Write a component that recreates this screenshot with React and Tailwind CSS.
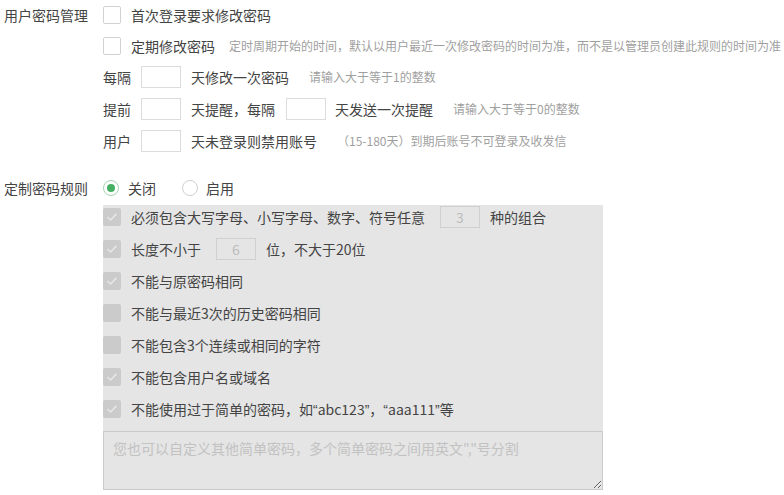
import React from "react";

const font = { fontFamily: '"Noto Sans CJK SC", "Microsoft YaHei", sans-serif' };

function Q({ children }) {
  return <span style={{ fontFamily: '"Liberation Sans", sans-serif' }}>{children}</span>;
}

function Box() {
  return <div className="w-[18px] h-[18px] shrink-0 rounded-[2px] border border-[#d2d2d2] bg-white" />;
}

function GrayBox({ checked }) {
  return (
    <div className="w-[18px] h-[18px] shrink-0 rounded-[2px] bg-[#cbcbcb] flex items-center justify-center">
      {checked && (
        <svg width="12" height="10" viewBox="0 0 12 10">
          <path d="M1.5 5.2 L4.6 8 L10.5 1.8" fill="none" stroke="#e6e6e6" strokeWidth="1.6" />
        </svg>
      )}
    </div>
  );
}

function Inp({ disabled, value }) {
  return (
    <div
      className={
        "w-[40px] h-[22px] shrink-0 border flex items-center justify-center text-[14px] " +
        (disabled ? "border-[#d0d0d0] bg-[#e5e5e5] text-[#bcbcbc]" : "border-[#dcdcdc] bg-white")
      }
    >
      {value}
    </div>
  );
}

function Note({ children, className = "" }) {
  return <span className={"text-[12px] text-[#9f9f9f] whitespace-nowrap " + className}>{children}</span>;
}

export default function App() {
  return (
    <div className="w-[784px] h-[495px] overflow-hidden bg-white text-[14px] text-[#444] leading-[20px] pl-[4px]" style={font}>
      {/* Section 1 */}
      <div className="flex">
        <div className="w-[99px] shrink-0 h-[30px] flex items-center">用户密码管理</div>
        <div className="flex flex-col">
          <div className="h-[30px] flex items-center">
            <Box />
            <span className="ml-[10px]">首次登录要求修改密码</span>
          </div>
          <div className="h-[31px] flex items-center whitespace-nowrap">
            <Box />
            <span className="ml-[10px]">定期修改密码</span>
            <Note className="ml-[14px]">定时周期开始的时间，默认以用户最近一次修改密码的时间为准，而不是以管理员创建此规则的时间为准</Note>
          </div>
          <div className="h-[32px] flex items-center whitespace-nowrap">
            <span className="w-[28px]">每隔</span>
            <div className="ml-[10px]"><Inp /></div>
            <span className="ml-[10px]">天修改一次密码</span>
            <Note className="ml-[20px]">请输入大于等于1的整数</Note>
          </div>
          <div className="h-[32px] flex items-center whitespace-nowrap">
            <span className="w-[28px]">提前</span>
            <div className="ml-[10px]"><Inp /></div>
            <span className="ml-[10px]">天提醒，每隔</span>
            <div className="ml-[11px]"><Inp /></div>
            <span className="ml-[9px]">天发送一次提醒</span>
            <Note className="ml-[20px]">请输入大于等于0的整数</Note>
          </div>
          <div className="h-[32px] flex items-center whitespace-nowrap">
            <span className="w-[28px]">用户</span>
            <div className="ml-[10px]"><Inp /></div>
            <span className="ml-[10px]">天未登录则禁用账号</span>
            <Note className="ml-[20px]">（15-180天）到期后账号不可登录及收发信</Note>
          </div>
        </div>
      </div>

      {/* Section 2 */}
      <div className="flex mt-[15px]">
        <div className="w-[99px] shrink-0 h-[32px] flex items-center">定制密码规则</div>
        <div className="flex flex-col">
          <div className="h-[32px] flex items-center">
            <div className="w-[16px] h-[16px] rounded-full border border-[#a8d2b1] bg-white flex items-center justify-center">
              <div className="w-[8px] h-[8px] rounded-full bg-[#45b062]" />
            </div>
            <span className="ml-[9px]">关闭</span>
            <div className="ml-[26px] w-[16px] h-[16px] rounded-full border border-[#d0d0d0] bg-white" />
            <span className="ml-[8px]">启用</span>
          </div>
          <div className="mt-[1px] w-[500px] bg-[#e5e5e5] pt-[3px] flex flex-col">
            <div className="flex flex-col gap-[14px]">
              <div className="h-[18px] flex items-center whitespace-nowrap">
                <GrayBox checked />
                <span className="ml-[10px]">必须包含大写字母、小写字母、数字、符号任意</span>
                <div className="ml-[15px]"><Inp disabled value="3" /></div>
                <span className="ml-[10px]">种的组合</span>
              </div>
              <div className="h-[18px] flex items-center whitespace-nowrap">
                <GrayBox checked />
                <span className="ml-[10px]">长度不小于</span>
                <div className="ml-[15px]"><Inp disabled value="6" /></div>
                <span className="ml-[10px]">位，不大于20位</span>
              </div>
              <div className="h-[18px] flex items-center">
                <GrayBox checked />
                <span className="ml-[10px]">不能与原密码相同</span>
              </div>
              <div className="h-[18px] flex items-center">
                <GrayBox />
                <span className="ml-[10px]">不能与最近3次的历史密码相同</span>
              </div>
              <div className="h-[18px] flex items-center">
                <GrayBox />
                <span className="ml-[10px]">不能包含3个连续或相同的字符</span>
              </div>
              <div className="h-[18px] flex items-center">
                <GrayBox checked />
                <span className="ml-[10px]">不能包含用户名或域名</span>
              </div>
              <div className="h-[18px] flex items-center whitespace-nowrap">
                <GrayBox checked />
                <span className="ml-[10px]">
                  不能使用过于简单的密码，如<Q>“</Q>abc123<Q>”</Q>，<Q>“</Q>aaa111<Q>”</Q>等
                </span>
              </div>
            </div>
            <textarea
              readOnly
              className="mt-[13px] block w-[500px] h-[59px] border border-[#cacaca] bg-[#e5e5e5] px-[9px] pt-[6px] text-[14px] leading-[20px] outline-none placeholder:text-[#c2c2c2]"
              style={font}
              placeholder={'您也可以自定义其他简单密码，多个简单密码之间用英文","号分割'}
            />
          </div>
        </div>
      </div>
    </div>
  );
}
